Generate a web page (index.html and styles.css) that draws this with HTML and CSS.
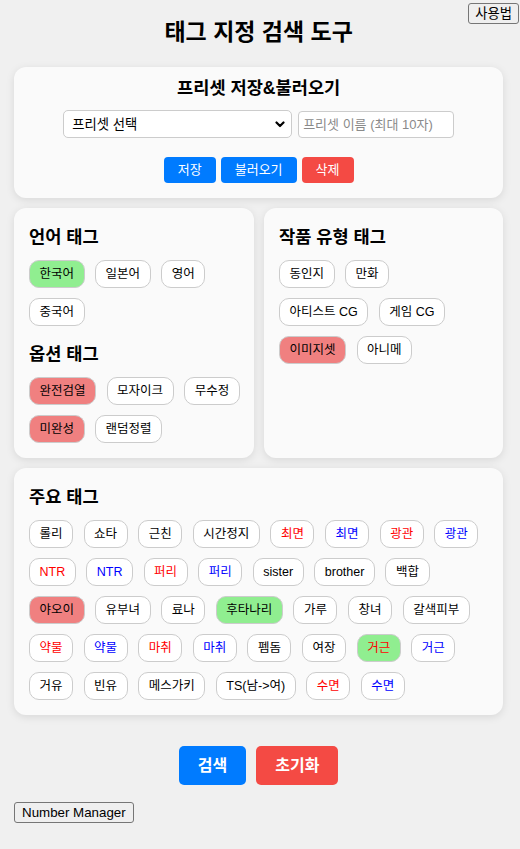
FILE: index.html
```html
<!DOCTYPE html>
<html lang="ko">
<head>
  <meta charset="UTF-8" />
  <title>태그 지정 검색 도구</title>
  <link rel="stylesheet" href="styles.css">
</head>
<body>
  <button class="plain help">사용법</button>
  <div class="app">
    <h1>태그 지정 검색 도구</h1>

    <div class="card preset">
      <h3>프리셋 저장&amp;불러오기</h3>
      <div class="preset-row">
        <select class="preset-select">
          <option>프리셋 선택</option>
        </select>
        <input class="preset-name" placeholder="프리셋 이름 (최대 10자)" maxlength="10" />
      </div>
      <div class="preset-btns">
        <button class="btn blue">저장</button>
        <button class="btn blue">불러오기</button>
        <button class="btn red">삭제</button>
      </div>
    </div>

    <div class="cols">
      <div class="card">
        <h3>언어 태그</h3>
        <div class="tags">
          <span class="tag on">한국어</span>
          <span class="tag">일본어</span>
          <span class="tag">영어</span>
          <span class="tag">중국어</span>
        </div>
        <h3 class="next">옵션 태그</h3>
        <div class="tags">
          <span class="tag off">완전검열</span>
          <span class="tag">모자이크</span>
          <span class="tag">무수정</span>
          <span class="tag off">미완성</span>
          <span class="tag">랜덤정렬</span>
        </div>
      </div>
      <div class="card">
        <h3>작품 유형 태그</h3>
        <div class="tags">
          <span class="tag">동인지</span>
          <span class="tag">만화</span>
          <span class="tag">아티스트 CG</span>
          <span class="tag">게임 CG</span>
          <span class="tag off">이미지셋</span>
          <span class="tag">아니메</span>
        </div>
      </div>
    </div>

    <div class="card main">
      <h3>주요 태그</h3>
      <div class="tags">
        <span class="tag">롤리</span>
        <span class="tag">쇼타</span>
        <span class="tag">근친</span>
        <span class="tag">시간정지</span>
        <span class="tag t-red">최면</span>
        <span class="tag t-blue">최면</span>
        <span class="tag t-red">광관</span>
        <span class="tag t-blue">광관</span>
        <span class="tag t-red">NTR</span>
        <span class="tag t-blue">NTR</span>
        <span class="tag t-red">퍼리</span>
        <span class="tag t-blue">퍼리</span>
        <span class="tag">sister</span>
        <span class="tag">brother</span>
        <span class="tag">백합</span>
        <span class="tag off">야오이</span>
        <span class="tag">유부녀</span>
        <span class="tag">료나</span>
        <span class="tag on">후타나리</span>
        <span class="tag">가루</span>
        <span class="tag">창녀</span>
        <span class="tag">갈색피부</span>
        <span class="tag t-red">약물</span>
        <span class="tag t-blue">약물</span>
        <span class="tag t-red">마취</span>
        <span class="tag t-blue">마취</span>
        <span class="tag">펨돔</span>
        <span class="tag">여장</span>
        <span class="tag on t-red">거근</span>
        <span class="tag t-blue">거근</span>
        <span class="tag">거유</span>
        <span class="tag">빈유</span>
        <span class="tag">메스가키</span>
        <span class="tag">TS(남-&gt;여)</span>
        <span class="tag t-red">수면</span>
        <span class="tag t-blue">수면</span>
      </div>
    </div>

    <div class="actions">
      <button class="btn big blue">검색</button>
      <button class="btn big red">초기화</button>
    </div>

    <button class="plain number">Number Manager</button>
  </div>
</body>
</html>
```

FILE: styles.css
```css
body {
  margin: 0;
  background-color: #f0f0f0;
  color: #000;
  font-family: "Liberation Sans", "Noto Sans CJK KR", sans-serif;
}
.app {
  padding: 0 16.7px 20px 14px;
}
h1 {
  font-size: 23px;
  line-height: 32px;
  text-align: center;
  margin: 16px 0 19px;
}
.card {
  background-color: #fafafa;
  border-radius: 12px;
  box-shadow: 0 2px 8px rgba(0, 0, 0, 0.1);
  padding: 15px;
}
.card h3 {
  font-size: 17.6px;
  line-height: 24px;
  margin: 2px 0 11px;
}
.card h3.next {
  margin-top: 16px;
}
.preset {
  padding-top: 9px;
  text-align: center;
}
.preset h3 {
  margin: 0 0 10px;
}
.preset-row {
  display: flex;
  justify-content: center;
  align-items: center;
  gap: 6px;
}
.preset-select {
  appearance: none;
  width: 229px;
  height: 28px;
  padding: 0 24px 0 8px;
  font-family: inherit;
  font-size: 13.33px;
  color: #000;
  background: #fff url("data:image/svg+xml;utf8,<svg xmlns='http://www.w3.org/2000/svg' width='10' height='7' viewBox='0 0 10 7'><path d='M1.5 1.5 L5 5 L8.5 1.5' fill='none' stroke='black' stroke-width='2.2' stroke-linecap='round' stroke-linejoin='round'/></svg>") no-repeat right 6px center;
  border: 1px solid #ccc;
  border-radius: 5px;
}
.preset-name {
  width: 156px;
  height: 27px;
  box-sizing: border-box;
  padding: 0 4px;
  font-family: inherit;
  font-size: 13px;
  background: #fff;
  border: 1px solid #ccc;
  border-radius: 4px;
}
.preset-name::placeholder {
  color: #8a8a8a;
}
.preset-btns {
  display: flex;
  justify-content: center;
  gap: 5px;
  margin-top: 19px;
}
.btn {
  border: none;
  border-radius: 4px;
  color: #fff;
  font-family: inherit;
  font-size: 13px;
  line-height: 16px;
  padding: 5px 14px;
}
.btn.blue {
  background-color: #007bff;
}
.btn.red {
  background-color: #f44a44;
}
.btn.big {
  font-size: 16px;
  font-weight: bold;
  line-height: 19px;
  padding: 10px 19px;
  border-radius: 5px;
}
.cols {
  display: grid;
  grid-template-columns: 240px 1fr;
  gap: 10px;
  margin-top: 10px;
}
.cols .card:first-child {
  padding-right: 14px;
}
.main {
  margin-top: 10px;
}
.tags {
  display: flex;
  flex-wrap: wrap;
  gap: 10px 10.6px;
}
.tag {
  background-color: #fff;
  border: 1px solid #ccc;
  border-radius: 10px;
  font-size: 12.5px;
  line-height: 16px;
  padding: 5px 9.5px;
}
.tag.on {
  background-color: #90ee90;
}
.tag.off {
  background-color: #f08080;
}
.t-red {
  color: #ff0000;
}
.t-blue {
  color: #0000ff;
}
.actions {
  display: flex;
  justify-content: center;
  gap: 10px;
  margin-top: 31px;
}
.plain {
  background-color: #efefef;
  border: 1px solid #767676;
  border-radius: 3px;
  color: #000;
  font-family: "Liberation Sans", "Noto Sans CJK KR", sans-serif;
  font-size: 13.33px;
  line-height: 15px;
  padding: 2px 7px;
}
.help {
  position: absolute;
  top: 3px;
  right: 1px;
  padding: 2px 6px;
}
.number {
  display: block;
  margin-top: 17px;
}
```
